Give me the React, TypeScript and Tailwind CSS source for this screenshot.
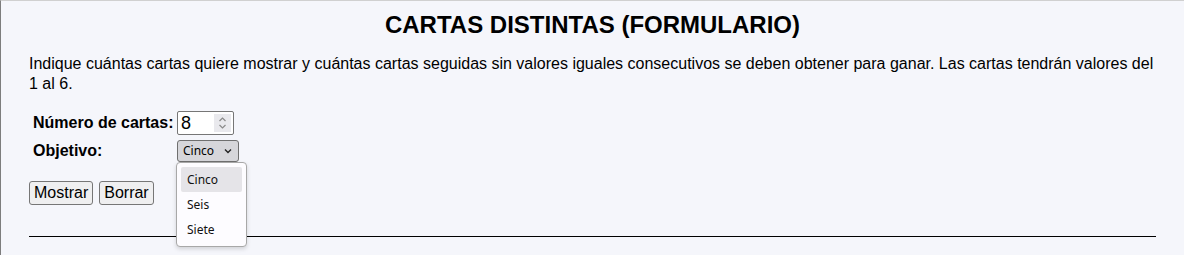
import React from 'react';

const opciones = ['Cinco', 'Seis', 'Siete'];

const Spinner: React.FC = () => (
  <div className="flex h-[18px] w-[17px] flex-col items-center justify-center bg-[#e9e9ed]">
    <svg width="9" height="14" viewBox="0 0 9 14" fill="none" stroke="#8a8a8a" strokeWidth="1.2">
      <path d="M1.5 5 L4.5 2 L7.5 5" />
      <path d="M1.5 9 L4.5 12 L7.5 9" />
    </svg>
  </div>
);

const SelectAbierto: React.FC = () => (
  <div className="relative">
    <div className="flex h-[22px] w-[62px] items-center justify-between rounded-[3px] border border-[#6f6f6f] bg-[#d6d6da] pl-[5px] pr-[6px] text-[12px] text-black [font-family:'Noto_Sans',sans-serif]">
      <span>Cinco</span>
      <svg width="8" height="6" viewBox="0 0 8 6" fill="none" stroke="#222" strokeWidth="1.4">
        <path d="M1 1.5 L4 4.5 L7 1.5" />
      </svg>
    </div>
    <div className="absolute left-[-1px] top-[22px] z-10 flex w-[71px] flex-col gap-0 rounded-[4px] border border-[#a8a8a8] bg-[#fdfcff] p-[4px] shadow-[0_2px_4px_rgba(0,0,0,0.15)] [font-family:'Noto_Sans',sans-serif]">
      {opciones.map((o, i) => (
        <div
          key={o}
          className={`flex h-[25px] items-center rounded-[2px] px-[6px] text-[12px] text-[#111] ${i === 0 ? 'bg-[#e5e4e8]' : ''}`}
        >
          {o}
        </div>
      ))}
    </div>
  </div>
);

export default function App() {
  return (
    <div className="min-h-[255px] overflow-hidden border-l border-t border-l-[#7d7d7d] border-t-[#d0d0d0] bg-[#f5f6fb] pl-[28px] pr-[28px] text-black [font-family:'Liberation_Sans',Arial,sans-serif]">
      <h1 className="pt-[10px] text-center text-[24px] font-bold leading-[28px]">CARTAS DISTINTAS (FORMULARIO)</h1>

      <p className="mt-[15px] text-[16px] leading-[20px]">
        Indique cuántas cartas quiere mostrar y cuántas cartas seguidas sin valores iguales consecutivos se deben obtener para
        ganar. Las cartas tendrán valores del 1 al 6.
      </p>

      <div className="mt-[15px] flex flex-col">
        <div className="flex h-[28px] items-center">
          <label className="w-[148px] pl-[4px] text-[16px] font-bold">Número de cartas:</label>
          <div className="flex h-[24px] w-[57px] items-center justify-between rounded-[2px] border border-[#767676] bg-white pl-[3px] pr-[2px]">
            <span className="text-[18px] leading-none">8</span>
            <Spinner />
          </div>
        </div>
        <div className="flex h-[28px] items-center">
          <label className="w-[148px] pl-[4px] text-[16px] font-bold">Objetivo:</label>
          <SelectAbierto />
        </div>
      </div>

      <div className="mt-[16px] flex gap-[6px]">
        <button className="h-[24px] rounded-[3px] border border-[#767676] bg-[#efeff0] px-[4px] text-[16px] leading-none">Mostrar</button>
        <button className="h-[24px] rounded-[3px] border border-[#767676] bg-[#efeff0] px-[4px] text-[16px] leading-none">Borrar</button>
      </div>

      <hr className="mt-[31px] border-t border-black" />

      <p className="mt-[13px] text-[16px] font-bold">Autor</p>
    </div>
  );
}
